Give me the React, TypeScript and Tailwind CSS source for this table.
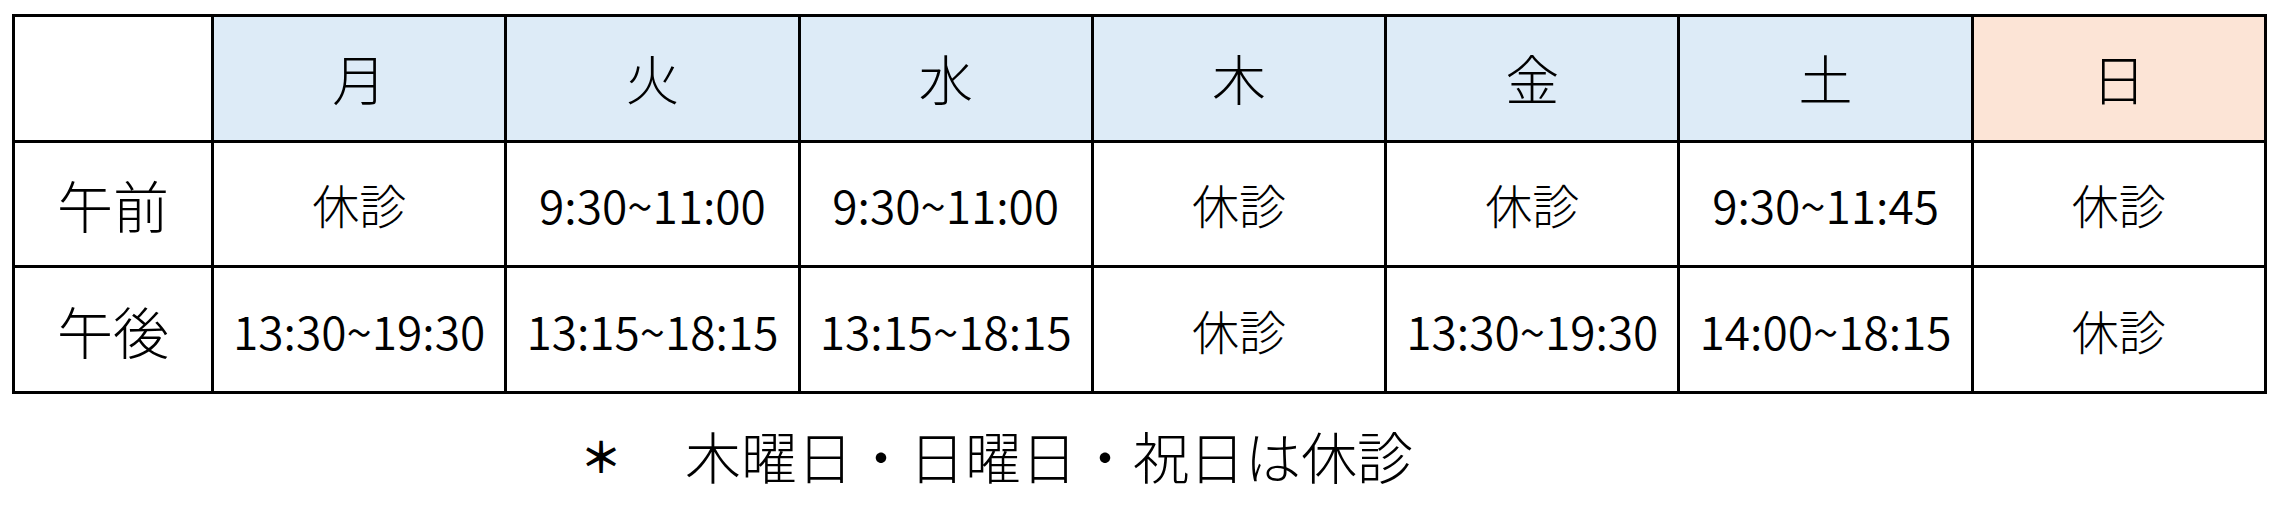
import React from "react";

const days = ["月", "火", "水", "木", "金", "土", "日"];

const rows = [
  {
    label: "午前",
    cells: ["休診", "9:30~11:00", "9:30~11:00", "休診", "休診", "9:30~11:45", "休診"],
  },
  {
    label: "午後",
    cells: ["13:30~19:30", "13:15~18:15", "13:15~18:15", "休診", "13:30~19:30", "14:00~18:15", "休診"],
  },
];

const App = () => {
  return (
    <div
      className="w-[2284px] h-[514px] bg-white text-black font-light"
      style={{ fontFamily: '"Noto Sans CJK JP", "Noto Sans", sans-serif' }}
    >
      {/* schedule table */}
      <div className="ml-[12px] pt-[14px]">
        <div className="grid grid-cols-[196px_repeat(7,1fr)] grid-rows-3 gap-[3px] p-[3px] bg-black w-[2255px] h-[380px]">
          <div className="bg-white" />
          {days.map((d, i) => (
            <div
              key={d}
              className={`flex items-center justify-center text-[54px] leading-none ${
                i === 6 ? "bg-[#fce4d6]" : "bg-[#ddebf7]"
              }`}
            >
              {d}
            </div>
          ))}
          {rows.map((r) => (
            <React.Fragment key={r.label}>
              <div className="bg-white flex items-center justify-center text-[56px] leading-none">
                {r.label}
              </div>
              {r.cells.map((c, i) => (
                <div
                  key={i}
                  className={`bg-white flex items-center justify-center leading-none ${
                    c === "休診" ? "text-[47px]" : "text-[46px] font-[350]"
                  }`}
                >
                  {c}
                </div>
              ))}
            </React.Fragment>
          ))}
        </div>
      </div>

      {/* note */}
      <div className="mt-[33px] flex items-center text-[56px] leading-none">
        <span className="w-[56px] ml-[573px] text-center text-[42px] font-bold">＊</span>
        <span className="ml-[56px]">木曜日・日曜日・祝日は休診</span>
      </div>
    </div>
  );
};

export default App;
